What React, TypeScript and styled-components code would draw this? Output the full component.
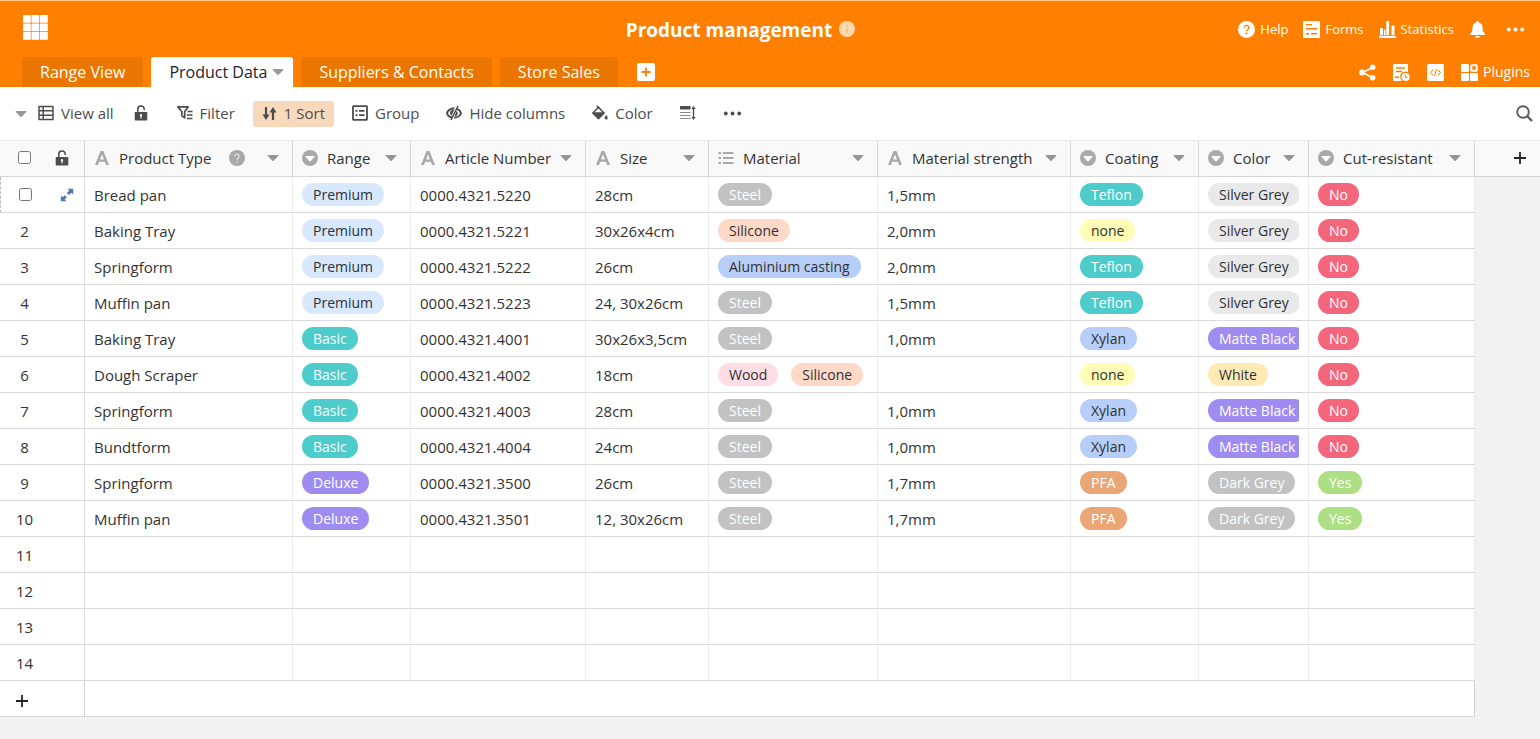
import React from "react";
import styled, { createGlobalStyle, css } from "styled-components";

const GlobalStyle = createGlobalStyle`
  *, *::before, *::after { box-sizing: border-box; }
  body {
    margin: 0;
    background: #f2f2f2;
    color: #333;
    font-family: "Open Sans", "Noto Sans", sans-serif;
    font-size: 15px;
  }
  button {
    border: 0;
    margin: 0;
    padding: 0;
    background: none;
    color: inherit;
    font: inherit;
    cursor: pointer;
  }
  svg { display: block; flex: none; }
`;

/* ---------- icons ---------- */

type IconProps = { size?: number };

const svgProps = (size: number) => ({
  width: size,
  height: size,
  fill: "currentColor",
  "aria-hidden": true,
});

const Caret = ({ size = 12 }: IconProps) => (
  <svg {...svgProps(size)} viewBox="0 0 12 12">
    <path d="M1.300 3h9.400a.6.6 0 0 1 .5 1L6.600 8.700a.8.8 0 0 1-1.200 0L.8 4a.6.6 0 0 1 .5-1z" />
  </svg>
);

const GridLogo = () => (
  <svg {...svgProps(25)} viewBox="0 0 25 25">
    {[0, 8.5, 17].map((y) =>
      [0, 8.5, 17].map((x) => <rect key={`${x}-${y}`} x={x} y={y} width="7.8" height="7.8" rx=".6" />)
    )}
  </svg>
);

const InfoIcon = () => (
  <svg {...svgProps(16)} viewBox="0 0 16 16">
    <circle cx="8" cy="8" r="8" fill="#fbd9b0" />
    <circle cx="8" cy="4.700" r="1" fill="#f3bd85" />
    <rect x="7.200" y="6.800" width="1.600" height="5" fill="#f3bd85" />
  </svg>
);

const QuestionCircle = ({ size = 17, mark = "#ff8000" }: IconProps & { mark?: string }) => (
  <svg {...svgProps(size)} viewBox="0 0 16 16">
    <circle cx="8" cy="8" r="8" />
    <path d="M5.900 6.300a2.100 2.100 0 1 1 3.300 1.700c-.8.500-1.200.8-1.200 1.700" fill="none" stroke={mark} strokeWidth="1.300" />
    <circle cx="8" cy="11.800" r=".9" fill={mark} />
  </svg>
);

const FormsIcon = () => (
  <svg {...svgProps(17)} viewBox="0 0 17 17">
    <path
      fillRule="evenodd"
      d="M1 0h15a1 1 0 0 1 1 1v15a1 1 0 0 1-1 1H1a1 1 0 0 1-1-1V1a1 1 0 0 1 1-1zM3 3v1.500h6V3zM3 7v1.500h11V7zM3 12v1.500h3V12zM8 12v1.500h6V12z"
    />
  </svg>
);

const StatsIcon = () => (
  <svg {...svgProps(17)} viewBox="0 0 17 17">
    <rect x="1" y="7" width="3" height="7.200" rx=".5" />
    <rect x="5" y="8.500" width="1.500" height="5.700" rx=".3" />
    <rect x="7.300" y="0" width="2.800" height="14.200" rx=".5" />
    <rect x="12.500" y="4.500" width="3" height="9.700" rx=".5" />
    <rect x="0" y="15" width="17" height="2" rx=".6" />
  </svg>
);

const BellIcon = () => (
  <svg {...svgProps(17)} viewBox="0 0 17 17">
    <path d="M8.500 0c.8 0 1.300.5 1.300 1.200v.4c2.300.6 3.700 2.500 3.700 4.900 0 3.300.7 4.700 2.300 6.100.6.600.2 1.400-.6 1.400H1.800c-.8 0-1.200-.8-.6-1.400 1.600-1.400 2.300-2.800 2.300-6.100 0-2.400 1.400-4.300 3.700-4.900v-.4C7.200.500 7.700 0 8.500 0zM6.300 15h4.400c0 1.200-1 2-2.200 2s-2.200-.8-2.200-2z" />
  </svg>
);

const DotsIcon = ({ size = 19 }: IconProps) => (
  <svg {...svgProps(size)} viewBox="0 0 19 19">
    <circle cx="2.800" cy="9.500" r="1.900" />
    <circle cx="9.500" cy="9.500" r="1.900" />
    <circle cx="16.200" cy="9.500" r="1.900" />
  </svg>
);

const ShareIcon = () => (
  <svg {...svgProps(17)} viewBox="0 0 17 17">
    <path d="M13.500 3.500 3.500 8.500l10 5" fill="none" stroke="currentColor" strokeWidth="1.600" />
    <circle cx="13.700" cy="3.300" r="2.700" />
    <circle cx="3" cy="8.500" r="2.900" />
    <circle cx="13.700" cy="13.700" r="2.700" />
  </svg>
);

const LogIcon = () => (
  <svg {...svgProps(17)} viewBox="0 0 17 17">
    <path
      fillRule="evenodd"
      d="M1 0h13a1 1 0 0 1 1 1v7.300A5 5 0 0 0 7.500 14c.1 1.200.6 2.200 1.300 3H1a1 1 0 0 1-1-1V1a1 1 0 0 1 1-1zM3 3.300v1.500h9V3.300zM3 6.800v1.500h6V6.800zM2 12.500V14h4v-1.500z"
    />
    <circle cx="12.600" cy="13" r="4" />
    <path d="M12.400 10.800v2.600h2.200" fill="none" stroke="#ff8000" strokeWidth="1" />
  </svg>
);

const CodeIcon = () => (
  <svg {...svgProps(17)} viewBox="0 0 17 17">
    <rect width="17" height="17" rx="1.500" />
    <path d="M6.200 5.800 3.500 8.500l2.700 2.700M10.800 5.800l2.700 2.700-2.700 2.700M9.300 5 7.700 12" fill="none" stroke="#ff8000" strokeWidth="1" />
  </svg>
);

const PluginsIcon = () => (
  <svg {...svgProps(17)} viewBox="0 0 17 17">
    <rect x="0" y="0" width="8" height="8" rx="1" />
    <rect x="0" y="9" width="8" height="8" rx="1" />
    <rect x="9" y="9" width="8" height="8" rx="1" />
    <rect x="10.300" y="1.300" width="5.400" height="5.400" rx=".5" fill="none" stroke="currentColor" strokeWidth="2" />
  </svg>
);

const AddBoxIcon = () => (
  <svg {...svgProps(18)} viewBox="0 0 18 18">
    <rect width="18" height="18" rx="2" />
    <path d="M9 4.500v9M4.500 9h9" stroke="#ff8000" strokeWidth="1.800" />
  </svg>
);

const TableIcon = () => (
  <svg {...svgProps(16)} viewBox="0 0 16 16">
    <path
      d="M1 1.500h14v13H1zM1 5.800h14M1 10.200h14M5.200 1.500v13"
      fill="none"
      stroke="currentColor"
      strokeWidth="1.500"
      strokeLinejoin="round"
    />
  </svg>
);

const UnlockIcon = () => (
  <svg {...svgProps(16)} viewBox="0 0 16 16">
    <path d="M4.800 7.500V4.300a3.200 3.200 0 0 1 6.400-.2v1" fill="none" stroke="currentColor" strokeWidth="1.500" />
    <path
      fillRule="evenodd"
      d="M2.500 7h11a.8.8 0 0 1 .8.800v6.900a.8.8 0 0 1-.8.800h-11a.8.8 0 0 1-.8-.8V7.800a.8.8 0 0 1 .8-.8zM8 9a1.300 1.300 0 0 0-.6 2.400v2.100h1.200v-2.100A1.300 1.300 0 0 0 8 9z"
    />
  </svg>
);

const FilterIcon = () => (
  <svg {...svgProps(16)} viewBox="0 0 16 16">
    <path d="M.9 1.900h10.200L7.700 6.500v6.300l-2.900-2V6.500z" fill="none" stroke="currentColor" strokeWidth="1.700" strokeLinejoin="round" />
    <path d="M10.500 6.500h5M9.800 10h5.700M9.800 13.500h5.700" stroke="currentColor" strokeWidth="1.700" />
  </svg>
);

const SortIcon = () => (
  <svg {...svgProps(15)} viewBox="0 0 15 15">
    <path d="M4 1v9M11 14V5" fill="none" stroke="currentColor" strokeWidth="2.200" />
    <path d="M7.500 6.500 11 1l3.500 5.500zM.5 8.500 4 14l3.500-5.500z" />
  </svg>
);

const GroupIcon = () => (
  <svg {...svgProps(16)} viewBox="0 0 16 16">
    <rect x="1" y="1.200" width="14" height="13.600" rx=".5" fill="none" stroke="currentColor" strokeWidth="1.800" />
    <path d="M3.500 5.800h2M7 5.800h5.500M3.500 10.200h2M7 10.200h5.500" stroke="currentColor" strokeWidth="1.700" />
  </svg>
);

const HideIcon = () => (
  <svg {...svgProps(16)} viewBox="0 0 16 16">
    <path
      d="M6 12.600C3.400 12 1.400 9.700 1 8c.5-2 3.300-4.700 7.400-4.700M11.200 3.800C13.200 4.700 14.700 6.700 15 8c-.5 2-3 4.600-6.800 4.700"
      fill="none"
      stroke="currentColor"
      strokeWidth="2"
    />
    <path d="M8.300 4.600 5.600 10.700a3.400 3.400 0 0 1 2.700-6.100zM10.800 5.800a3.400 3.400 0 0 1-2.500 5.800z" />
    <path d="M12 1 5 15" stroke="currentColor" strokeWidth="1.500" />
  </svg>
);

const PaintIcon = () => (
  <svg {...svgProps(16)} viewBox="0 0 16 16">
    <path d="M6.500 2.300 12 8l-5.500 5.500L1 8z" fill="none" stroke="currentColor" strokeWidth="1.500" strokeLinejoin="round" />
    <path d="M4.600.8 7.500 3.500" stroke="currentColor" strokeWidth="1.400" />
    <path d="M1 8h11l-5.500 5.500z" stroke="currentColor" strokeWidth="1.300" strokeLinejoin="round" />
    <path d="M14.200 9.800c.8 1.300 1.500 2.200 1.500 3.100a1.500 1.500 0 0 1-3 0c0-.9.700-1.800 1.500-3.100z" />
  </svg>
);

const RowHeightIcon = () => (
  <svg {...svgProps(16)} viewBox="0 0 16 16">
    <rect x="0" y="1" width="10.500" height="3.500" rx=".4" />
    <path d="M0 7.500h10.500M0 10.500h10.500M0 13.500h10.500" stroke="#888" strokeWidth="1" />
    <path d="M13.500 3v10" stroke="currentColor" strokeWidth="1.400" />
    <path d="M13.500 1 15.700 4h-4.400zM13.500 15l2.200-3h-4.400z" />
  </svg>
);

const SearchIcon = () => (
  <svg {...svgProps(17)} viewBox="0 0 17 17">
    <circle cx="7" cy="7" r="5.800" fill="none" stroke="currentColor" strokeWidth="1.900" />
    <path d="m11 11 5 5" stroke="currentColor" strokeWidth="2.400" />
  </svg>
);

const TextTypeIcon = () => (
  <svg {...svgProps(16)} viewBox="0 0 16 16">
    <path d="M6.600 1h2.800L15 15h-2.900l-1.200-3.200H5.100L3.900 15H1zM8 4.200 6 9.400h4z" fillRule="evenodd" />
  </svg>
);

const SelectTypeIcon = () => (
  <svg {...svgProps(16)} viewBox="0 0 16 16">
    <circle cx="8" cy="8" r="8" />
    <path d="M3.800 6h8.400a.5.500 0 0 1 .4.800l-4.100 4.500a.7.700 0 0 1-1 0L3.400 6.800a.5.500 0 0 1 .4-.8z" fill="#fff" />
  </svg>
);

const ListTypeIcon = () => (
  <svg {...svgProps(16)} viewBox="0 0 16 16">
    <path d="M.5 3h2.500M.5 8h2.500M.5 13h2.500" stroke="currentColor" strokeWidth="2" />
    <path d="M5 3h10.500M5 8h10.500M5 13h10.500" stroke="currentColor" strokeWidth="2" />
  </svg>
);

const ExpandIcon = () => (
  <svg {...svgProps(14)} viewBox="0 0 14 14">
    <path d="M7.500.800h5.700v5.700L11.400 4.700 9 7.100 6.900 5l2.400-2.400zM6.500 13.200H.8V7.500l1.800 1.800L4.700 7.200l2.100 2.100-2.100 2.100z" />
  </svg>
);

const PlusIcon = () => (
  <svg {...svgProps(14)} viewBox="0 0 14 14">
    <path d="M7 1v12M1 7h12" stroke="currentColor" strokeWidth="1.800" />
  </svg>
);

/* ---------- layout ---------- */

const Header = styled.header`
  background: #ff8000;
  border-top: 1px solid #ffc680;
  color: #fff;
`;

const TitleRow = styled.div`
  display: grid;
  grid-template-columns: 1fr auto 1fr;
  align-items: center;
  height: 56px;
  padding: 0 15px 0 23px;
`;

const HomeLink = styled.a`
  justify-self: start;
  margin-bottom: 4px;
  color: #fff;
`;

const TitleGroup = styled.div`
  display: flex;
  align-items: center;
  gap: 7px;
  padding-right: 67px;
`;

const Title = styled.h1`
  margin: 0;
  padding-top: 2px;
  font-size: 19px;
  line-height: 28px;
  font-weight: 700;
  white-space: nowrap;
`;

const TopActions = styled.nav`
  display: flex;
  justify-self: end;
  align-items: center;
  gap: 15px;
`;

const TopAction = styled.button<{ $large?: boolean }>`
  display: flex;
  align-items: center;
  gap: 5px;
  font-size: ${(p) => (p.$large ? 14 : 13)}px;
  line-height: 20px;
`;

const MoreAction = styled(TopAction)`
  padding-left: 5px;
`;

const TabRow = styled.div`
  display: flex;
  justify-content: space-between;
  height: 30px;
  padding: 0 10px 0 22px;
`;

const Tabs = styled.nav`
  display: flex;
  align-items: center;
  gap: 8px;
`;

const Tab = styled.button<{ $active?: boolean }>`
  display: flex;
  align-items: center;
  gap: 5px;
  height: 30px;
  padding: 0 18px;
  border-radius: 3px 3px 0 0;
  background: #ea7600;
  color: #fff;
  font-size: 16px;
  white-space: nowrap;
  ${(p) =>
    p.$active &&
    css`
      padding-right: 9px;
      background: #fff;
      color: #212529;
      svg { color: #999; }
    `}
`;

const AddTab = styled.button`
  margin-left: 11px;
`;

const SubActions = styled.div`
  display: flex;
  align-items: center;
  gap: 17px;
`;

const Toolbar = styled.div`
  display: flex;
  align-items: center;
  justify-content: space-between;
  height: 53px;
  padding: 0 7px 0 6px;
  background: #fff;
  color: #4d4d4d;
`;

const ToolGroup = styled.div`
  display: flex;
  align-items: center;
  gap: 9px;
`;

const ViewGroup = styled.div`
  display: flex;
  align-items: center;
  gap: 1px;
  margin-right: 1px;
`;

const ViewToggle = styled.button`
  padding: 0 1px 0 9px;
  color: #999;
`;

const Tool = styled.button<{ $highlight?: boolean }>`
  display: flex;
  align-items: center;
  gap: 7px;
  height: 26px;
  padding: 0 9px 1px;
  border-radius: 3px;
  background: ${(p) => (p.$highlight ? "#f8d9bb" : "transparent")};
  white-space: nowrap;
`;

const SearchButton = styled.button`
  color: #5c5c5c;
`;

/* ---------- grid ---------- */

const Table = styled.table`
  width: 100%;
  min-width: 1540px;
  table-layout: fixed;
  border-collapse: separate;
  border-spacing: 0;
`;

const Col = styled.col<{ $width?: number }>`
  width: ${(p) => (p.$width ? `${p.$width}px` : "auto")};
`;

const HeadCell = styled.th`
  height: 37px;
  padding: 0 0 2px;
  border-top: 1px solid #ececec;
  border-right: 1px solid #d9d9d9;
  border-bottom: 1px solid #d6d6d6;
  background: #f9f9f9;
  font-weight: 400;
  line-height: 20px;
  text-align: left;
`;

const AddColumnCell = styled(HeadCell)`
  border-right: 0;
  padding-left: 38px;
`;

const HeadContent = styled.div`
  display: flex;
  align-items: center;
  padding: 0 13px 0 9px;
  color: #a8a8a8;
`;

const HeadLabel = styled.span`
  margin-left: 9px;
  color: #333;
  white-space: nowrap;
`;

const HelpMark = styled.span`
  margin-left: 18px;
`;

const HeadMenu = styled.button`
  margin-left: auto;
  color: #969696;
`;

const Cell = styled.td`
  height: 36px;
  padding: 0 9px;
  border-right: 1px solid #ececec;
  border-bottom: 1px solid #d9d9d9;
  background: #fff;
  line-height: 20px;
  white-space: nowrap;
`;

const TextCell = styled(Cell)`
  padding-top: 1px;
`;

const RowHead = styled(Cell)<{ $current?: boolean }>`
  padding: 0;
  border-right-color: #dcdcdc;
  ${(p) =>
    p.$current &&
    css`
      border-left: 1px dashed #bbb;
    `}
`;

const Gutter = styled.div`
  display: flex;
  align-items: center;
`;

const RowIndex = styled.div`
  display: flex;
  justify-content: center;
  width: 49px;
`;

const Checkbox = styled.input`
  width: 13px;
  height: 13px;
  margin: 0;
`;

const LockMark = styled.span`
  margin-left: 5px;
  color: #4d4d4d;
`;

const ExpandButton = styled.button`
  margin-left: 10px;
  color: #4a78b8;
`;

const AddButton = styled.button`
  display: block;
  color: #212529;
`;

const AddRowCell = styled(Cell)`
  padding: 4px 0 0 15px;
  border-right-color: #d0d0d0;
`;

const PillList = styled.div`
  display: flex;
  gap: 13px;
  overflow: hidden;
`;

const Pill = styled.span<{ $bg: string; $fg: string }>`
  flex: none;
  height: 23px;
  padding: 0 11px;
  border-radius: 12px;
  background: ${(p) => p.$bg};
  color: ${(p) => p.$fg};
  font-size: 14px;
  line-height: 24px;
`;

/* ---------- data ---------- */

const dark = "#303030";
const light = "#ffffff";

const options: Record<string, [string, string]> = {
  Premium: ["#d7e8ff", dark],
  Basic: ["#4ecccb", light],
  Deluxe: ["#9f8cf1", light],
  Steel: ["#c2c2c2", light],
  Silicone: ["#ffd9c8", dark],
  "Aluminium casting": ["#b7cef9", dark],
  Wood: ["#ffdde5", dark],
  Teflon: ["#4ecccb", light],
  none: ["#fffcb5", dark],
  Xylan: ["#b7cef9", dark],
  PFA: ["#eaa775", light],
  "Silver Grey": ["#e9e9e9", dark],
  "Matte Black": ["#9f8cf1", light],
  White: ["#ffeab6", dark],
  "Dark Grey": ["#c2c2c2", light],
  No: ["#f4667c", light],
  Yes: ["#addf84", light],
};

type Column = { name: string; type: "text" | "select" | "multi"; width: number; help?: boolean };

const columns: Column[] = [
  { name: "Product Type", type: "text", width: 208, help: true },
  { name: "Range", type: "select", width: 118 },
  { name: "Article Number", type: "text", width: 175 },
  { name: "Size", type: "text", width: 123 },
  { name: "Material", type: "multi", width: 169 },
  { name: "Material strength", type: "text", width: 193 },
  { name: "Coating", type: "select", width: 128 },
  { name: "Color", type: "select", width: 110 },
  { name: "Cut-resistant", type: "select", width: 166 },
];

const rows: string[][] = [
  ["Bread pan", "Premium", "0000.4321.5220", "28cm", "Steel", "1,5mm", "Teflon", "Silver Grey", "No"],
  ["Baking Tray", "Premium", "0000.4321.5221", "30x26x4cm", "Silicone", "2,0mm", "none", "Silver Grey", "No"],
  ["Springform", "Premium", "0000.4321.5222", "26cm", "Aluminium casting", "2,0mm", "Teflon", "Silver Grey", "No"],
  ["Muffin pan", "Premium", "0000.4321.5223", "24, 30x26cm", "Steel", "1,5mm", "Teflon", "Silver Grey", "No"],
  ["Baking Tray", "Basic", "0000.4321.4001", "30x26x3,5cm", "Steel", "1,0mm", "Xylan", "Matte Black", "No"],
  ["Dough Scraper", "Basic", "0000.4321.4002", "18cm", "Wood|Silicone", "", "none", "White", "No"],
  ["Springform", "Basic", "0000.4321.4003", "28cm", "Steel", "1,0mm", "Xylan", "Matte Black", "No"],
  ["Bundtform", "Basic", "0000.4321.4004", "24cm", "Steel", "1,0mm", "Xylan", "Matte Black", "No"],
  ["Springform", "Deluxe", "0000.4321.3500", "26cm", "Steel", "1,7mm", "PFA", "Dark Grey", "Yes"],
  ["Muffin pan", "Deluxe", "0000.4321.3501", "12, 30x26cm", "Steel", "1,7mm", "PFA", "Dark Grey", "Yes"],
  [],
  [],
  [],
  [],
];

const typeIcons = { text: TextTypeIcon, select: SelectTypeIcon, multi: ListTypeIcon };

const DataCell = ({ column, value }: { column: Column; value?: string }) => {
  if (!value || column.type === "text") return <TextCell>{value}</TextCell>;
  return (
    <Cell>
      <PillList>
        {value.split("|").map((name) => (
          <Pill key={name} $bg={options[name][0]} $fg={options[name][1]}>
            {name}
          </Pill>
        ))}
      </PillList>
    </Cell>
  );
};

const ProductTable = () => (
  <Table>
    <colgroup>
      <Col $width={85} />
      {columns.map((c) => (
        <Col key={c.name} $width={c.width} />
      ))}
      <Col />
    </colgroup>
    <thead>
      <tr>
        <HeadCell>
          <Gutter>
            <RowIndex>
              <Checkbox type="checkbox" aria-label="Select all rows" />
            </RowIndex>
            <LockMark>
              <UnlockIcon />
            </LockMark>
          </Gutter>
        </HeadCell>
        {columns.map((c) => {
          const TypeIcon = typeIcons[c.type];
          return (
            <HeadCell key={c.name} scope="col">
              <HeadContent>
                <TypeIcon />
                <HeadLabel>{c.name}</HeadLabel>
                {c.help && (
                  <HelpMark>
                    <QuestionCircle size={16} mark="#e4e4e4" />
                  </HelpMark>
                )}
                <HeadMenu aria-label={`${c.name} column menu`}>
                  <Caret />
                </HeadMenu>
              </HeadContent>
            </HeadCell>
          );
        })}
        <AddColumnCell>
          <AddButton aria-label="Add column">
            <PlusIcon />
          </AddButton>
        </AddColumnCell>
      </tr>
    </thead>
    <tbody>
      {rows.map((row, i) => (
        <tr key={i}>
          <RowHead $current={i === 0}>
            <Gutter>
              <RowIndex>{i === 0 ? <Checkbox type="checkbox" aria-label="Select row 1" /> : i + 1}</RowIndex>
              {i === 0 && (
                <ExpandButton aria-label="Expand row 1">
                  <ExpandIcon />
                </ExpandButton>
              )}
            </Gutter>
          </RowHead>
          {columns.map((c, j) => (
            <DataCell key={c.name} column={c} value={row[j]} />
          ))}
        </tr>
      ))}
      <tr>
        <AddRowCell>
          <AddButton aria-label="Add row">
            <PlusIcon />
          </AddButton>
        </AddRowCell>
        <AddRowCell colSpan={columns.length} />
      </tr>
    </tbody>
  </Table>
);

export default function App() {
  return (
    <>
      <GlobalStyle />
      <Header>
        <TitleRow>
          <HomeLink href="#" aria-label="Home">
            <GridLogo />
          </HomeLink>
          <TitleGroup>
            <Title>Product management</Title>
            <InfoIcon />
          </TitleGroup>
          <TopActions>
            <TopAction>
              <QuestionCircle />
              Help
            </TopAction>
            <TopAction>
              <FormsIcon />
              Forms
            </TopAction>
            <TopAction>
              <StatsIcon />
              Statistics
            </TopAction>
            <TopAction aria-label="Notifications">
              <BellIcon />
            </TopAction>
            <MoreAction aria-label="More">
              <DotsIcon />
            </MoreAction>
          </TopActions>
        </TitleRow>
        <TabRow>
          <Tabs>
            <Tab>Range View</Tab>
            <Tab $active>
              Product Data
              <Caret />
            </Tab>
            <Tab>Suppliers &amp; Contacts</Tab>
            <Tab>Store Sales</Tab>
            <AddTab aria-label="Add table">
              <AddBoxIcon />
            </AddTab>
          </Tabs>
          <SubActions>
            <TopAction aria-label="Share">
              <ShareIcon />
            </TopAction>
            <TopAction aria-label="Logs">
              <LogIcon />
            </TopAction>
            <TopAction aria-label="Scripts">
              <CodeIcon />
            </TopAction>
            <TopAction $large>
              <PluginsIcon />
              Plugins
            </TopAction>
          </SubActions>
        </TabRow>
      </Header>
      <Toolbar>
        <ToolGroup>
          <ViewGroup>
            <ViewToggle aria-label="Show views">
              <Caret />
            </ViewToggle>
            <Tool>
              <TableIcon />
              View all
            </Tool>
            <Tool aria-label="Lock view">
              <UnlockIcon />
            </Tool>
          </ViewGroup>
          <Tool>
            <FilterIcon />
            Filter
          </Tool>
          <Tool $highlight>
            <SortIcon />1 Sort
          </Tool>
          <Tool>
            <GroupIcon />
            Group
          </Tool>
          <Tool>
            <HideIcon />
            Hide columns
          </Tool>
          <Tool>
            <PaintIcon />
            Color
          </Tool>
          <Tool aria-label="Row height">
            <RowHeightIcon />
          </Tool>
          <Tool aria-label="More tools">
            <DotsIcon />
          </Tool>
        </ToolGroup>
        <SearchButton aria-label="Search">
          <SearchIcon />
        </SearchButton>
      </Toolbar>
      <ProductTable />
    </>
  );
}
